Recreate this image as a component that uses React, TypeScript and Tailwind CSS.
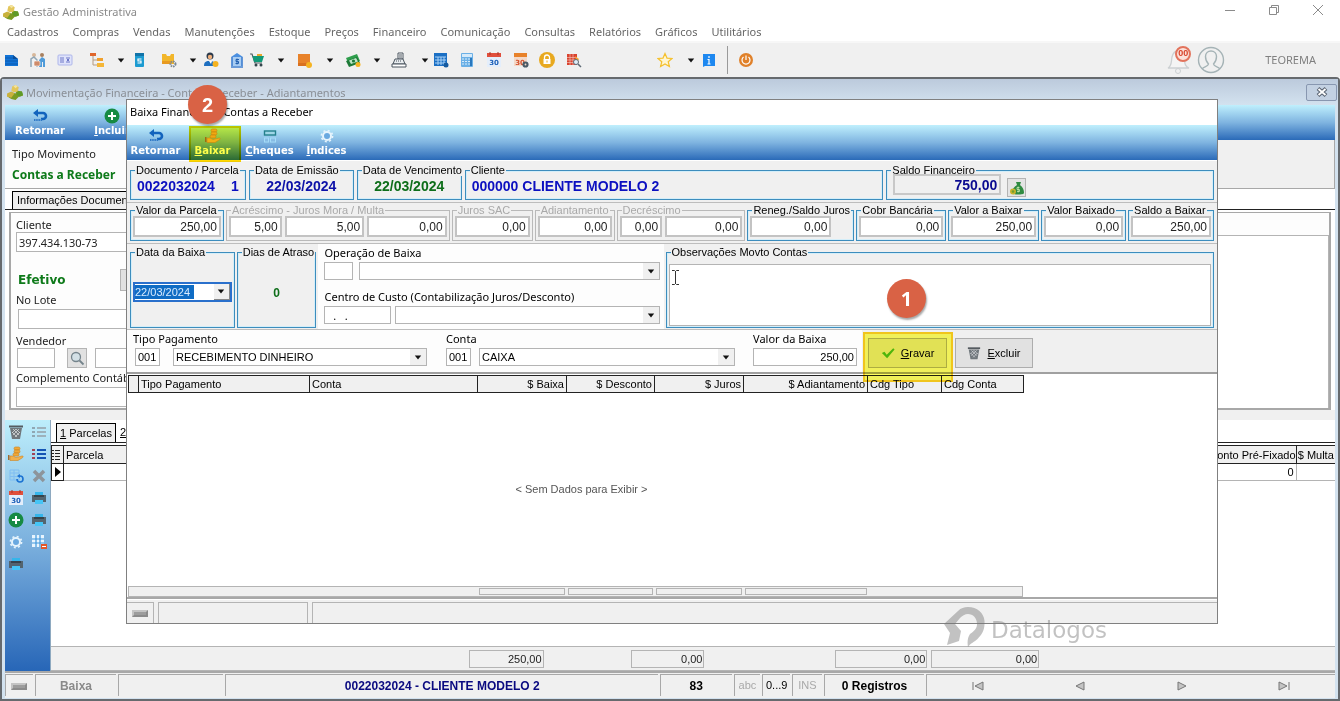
import type { ReactNode } from "react";
import clsx from "clsx";

const icons: Record<string, ReactNode> = {
  logo: (
    <>
      <path d="M1 11l5-3 3 1 1-3 5 1 1 4-4 1-3 3-4-1-2-1z" fill="#7a9b23" />
      <path d="M1 9l4-2 3 2-3 4-4-1z" fill="#c9b13c" />
      <path d="M6 2l3-1 3 2-1 4-4 1-2-2z" fill="#e3c65a" />
      <path d="M7 2l2-1 2 1-2 2z" fill="#f3e3a0" />
      <path d="M11 7l4 0 1 3-3 2-3-2z" fill="#5f9a28" />
    </>
  ),
  database: (
    <>
      <path d="M1 3h8l5 4v7H1z" fill="#1273d6" />
      <path d="M1 6h8M1 9h13M1 12h13" stroke="#0b5bb0" strokeWidth="1" />
      <path d="M9 3v4h5z" fill="#0a4f9c" />
    </>
  ),
  people: (
    <>
      <circle cx="4" cy="3" r="2" fill="#d7b79a" />
      <circle cx="12" cy="3" r="2" fill="#a8805f" />
      <path d="M1 15V7l3-2 3 3v7" fill="none" stroke="#8fa5b5" strokeWidth="1.5" />
      <path d="M9 15V8l3-3 3 2v8h-2v-5h-1v5z" fill="#4f9bd9" />
      <rect x="4" y="9" width="6" height="5" rx="1" fill="#cf8b6a" stroke="#fff" strokeWidth=".6" />
    </>
  ),
  card: (
    <>
      <rect x="1" y="3" width="14" height="10" rx="1" fill="#dfe3fa" stroke="#aeb6ea" />
      <path d="M3 6h4M3 8h4M3 10h4M9 6h4M9 10h4" stroke="#6c76c8" />
      <rect x="10" y="7" width="2" height="2" fill="#6c76c8" />
    </>
  ),
  tree: (
    <>
      <path d="M4 4v9h5M4 8h5" fill="none" stroke="#b59a80" />
      <rect x="1" y="1" width="6" height="3" fill="#e0662c" />
      <rect x="8" y="6" width="6" height="3" fill="#f0a02c" />
      <rect x="8" y="11" width="7" height="4" fill="#f5b738" />
    </>
  ),
  phone: (
    <>
      <rect x="4" y="1" width="9" height="14" rx="1" fill="#1c9bd1" />
      <rect x="4" y="1" width="9" height="3" fill="#1273a8" />
      <path d="M10.500 7H7v2h3v2H6.500" fill="none" stroke="#fff" strokeWidth="1.200" />
    </>
  ),
  boxGear: (
    <>
      <path d="M1 2h4l1 2h3l1-2h3v10H1z" fill="#f2b62a" />
      <path d="M1 9h9v3H1z" fill="#e89a20" />
      <circle cx="12" cy="12" r="2.500" fill="none" stroke="#7b8794" strokeWidth="2" strokeDasharray="1.500 .8" />
    </>
  ),
  userCoin: (
    <>
      <circle cx="7" cy="4" r="3.500" fill="#2b3a4c" />
      <circle cx="7" cy="5" r="2.200" fill="#f0b17d" />
      <path d="M1 14c0-5 3-5 6-5s5 1 6 5z" fill="#1e6fc0" />
      <path d="M6 9h3l-1 3z" fill="#fff" />
      <circle cx="12.500" cy="12" r="3" fill="#f5b321" />
    </>
  ),
  bank: (
    <>
      <path d="M2 5l6-4 6 4z" fill="#4b8fe0" />
      <path d="M3 5h10v9H3z" fill="#a9cdf2" />
      <path d="M3 5v9M13 5v9M2 15h12" stroke="#3f7fd0" strokeWidth="1.600" />
      <path d="M10 7.500H7v2h2.500v2H6.500M8 6.500v6" fill="none" stroke="#2360b0" />
    </>
  ),
  cart: (
    <>
      <path d="M1 2h2l3 9h7" fill="none" stroke="#4a5a5f" strokeWidth="1.200" />
      <path d="M3.500 4H15l-2 6H5z" fill="#129a78" />
      <path d="M8 2h5v2H8z" fill="#e9a72b" />
      <circle cx="7" cy="13" r="1.500" fill="#35464d" />
      <circle cx="12" cy="13" r="1.500" fill="#35464d" />
    </>
  ),
  box: (
    <>
      <path d="M2 2h12v12H2z" fill="#e8822a" />
      <path d="M2 11h12v3H2z" fill="#d9701f" />
      <circle cx="13" cy="13" r="3" fill="#f5b321" />
    </>
  ),
  money: (
    <>
      <path d="M1 6l11-4 3 7-11 4z" fill="#2e9e4c" />
      <path d="M1 9l11-4 3 6-11 4z" fill="#1d7a37" />
      <path d="M4 8.500l7-2.500 2 3.500-7 2.500z" fill="#bfe6c6" />
      <circle cx="8.500" cy="9" r="1.600" fill="#1d7a37" />
      <circle cx="13" cy="12.500" r="2.500" fill="#f5b321" />
    </>
  ),
  register: (
    <>
      <path d="M7 1h5v6H7z" fill="#fff" stroke="#4b555e" />
      <path d="M8 3h3M8 5h3" stroke="#4b555e" />
      <path d="M4 7h8l2 5H2z" fill="#e9edf0" stroke="#4b555e" />
      <path d="M1 12h14v3H1z" fill="#fff" stroke="#4b555e" />
      <path d="M5 9h6" stroke="#4b555e" strokeDasharray="1 1" />
    </>
  ),
  calGrid: (
    <>
      <rect x="1" y="1" width="13" height="13" fill="#1b6fc4" />
      <path d="M2 5h11M2 8h11M2 11h11M5 5v8M8 5v8M11 5v8" stroke="#a9d2f6" />
      <circle cx="13" cy="13" r="2.500" fill="#155a9f" />
    </>
  ),
  calc: (
    <>
      <rect x="2" y="1" width="12" height="14" rx="1" fill="#6bb0e6" />
      <rect x="3" y="2" width="10" height="3" fill="#d5eafa" />
      <path d="M3 7h8M3 9.500h8M3 12h8" stroke="#d9ecfa" strokeDasharray="2 1" />
      <path d="M12 6v8" stroke="#2a78bd" strokeWidth="2" />
    </>
  ),
  cal30: (
    <>
      <rect x="1" y="3" width="14" height="12" fill="#e4eefb" />
      <rect x="1" y="1" width="14" height="4" fill="#e04f3c" />
      <path d="M4 0v3M12 0v3" stroke="#a83224" />
      <text x="8" y="12.500" textAnchor="middle" fontSize="7" fontWeight="700" fontFamily="DejaVu Sans, sans-serif" fill="#1b5fb8">30</text>
    </>
  ),
  cal30Gear: (
    <>
      <rect x="1" y="3" width="13" height="11" fill="#f4d9c8" />
      <rect x="1" y="1" width="13" height="4" fill="#e8822a" />
      <text x="7" y="12.500" textAnchor="middle" fontSize="7" fontWeight="700" fontFamily="DejaVu Sans, sans-serif" fill="#d4502c">30</text>
      <circle cx="12.500" cy="12.500" r="2" fill="none" stroke="#4a5a66" strokeWidth="2.200" />
    </>
  ),
  lock: (
    <>
      <circle cx="8" cy="8" r="8" fill="#e8a91f" />
      <rect x="4.500" y="7" width="7" height="5" fill="#fff" />
      <path d="M5.500 7V5.500a2.500 2.500 0 015 0V7" fill="none" stroke="#fff" strokeWidth="1.300" />
      <path d="M8 8.500v2" stroke="#e8a91f" />
    </>
  ),
  gridSearch: (
    <>
      <rect x="1" y="2" width="10" height="11" fill="#d9432f" />
      <path d="M1 5.500h10M1 8h10M1 10.500h10M4 2v11M7 2v11" stroke="#f7cfc4" strokeWidth=".6" />
      <path d="M9 4l4 3-2 4z" fill="#f1a630" />
      <circle cx="10" cy="10" r="2.500" fill="#dfeefa" stroke="#5f6b76" />
      <path d="M12 12l3 3" stroke="#5f6b76" strokeWidth="1.500" />
    </>
  ),
  star: <path d="M8 1.500l2 4.600 5 .4-3.800 3.200 1.200 4.900L8 12l-4.400 2.600 1.200-4.900L1 6.500l5-.4z" fill="#fff6d2" stroke="#f5c02e" strokeWidth="1.200" />,
  info: (
    <>
      <path d="M2 2h12v12H4l-2 1z" fill="#1e88f0" />
      <path d="M8 4v2M6.500 7.500H8V12M6.500 12h3" fill="none" stroke="#fff" strokeWidth="1.200" />
    </>
  ),
  power: (
    <>
      <circle cx="8" cy="8" r="7" fill="#e0812a" />
      <path d="M5.500 5a4 4 0 105 0M8 3.500V8" fill="none" stroke="#fff" strokeWidth="1.200" />
    </>
  ),
  back: (
    <>
      <path d="M4 5h7a3 3 0 010 6H9" fill="none" stroke="#1263bd" strokeWidth="2.600" />
      <path d="M1 5l5-4v8z" fill="#1263bd" />
      <path d="M2 12h8" stroke="#2f78c6" strokeWidth="2" strokeDasharray="1.500 .7" />
    </>
  ),
  plus: (
    <>
      <circle cx="8" cy="8" r="7.500" fill="#178a43" />
      <path d="M8 4v8M4 8h8" stroke="#fff" strokeWidth="2" />
    </>
  ),
  coinsHand: (
    <>
      <rect x="6" y="1" width="6" height="3" rx="1.500" fill="#f0a838" stroke="#c8801c" strokeWidth=".6" />
      <rect x="6" y="4" width="6" height="3" rx="1.500" fill="#f0a838" stroke="#c8801c" strokeWidth=".6" />
      <rect x="5" y="7" width="6" height="3" rx="1.500" fill="#f0a838" stroke="#c8801c" strokeWidth=".6" />
      <path d="M0 9h1.500v5H0z" fill="#a06a32" />
      <path d="M2 10h3l3 1.500 6-1.500c2 0 1 1.500 0 2l-4 2.500H2z" fill="#f0b04c" stroke="#cf8522" strokeWidth=".6" />
    </>
  ),
  cheque: (
    <>
      <rect x="2.500" y="3" width="11" height="4" fill="#9fd6e6" stroke="#24808c" strokeWidth="1.400" />
      <rect x="2.500" y="10" width="4" height="4" fill="none" stroke="#a5dcf8" />
      <rect x="8.500" y="10" width="5" height="4" fill="none" stroke="#a5dcf8" />
    </>
  ),
  gear: (
    <>
      <circle cx="8" cy="8" r="4" fill="#6aa9e0" stroke="#e6f4fd" strokeWidth="2" />
      <circle cx="8" cy="8" r="5.600" fill="none" stroke="#e6f4fd" strokeWidth="1.600" strokeDasharray="2 2.400" />
    </>
  ),
  trash: (
    <>
      <path d="M1 2.500h14" stroke="#555b60" strokeWidth="2" />
      <path d="M2 4h12l-2 11H4z" fill="#70777c" />
      <path d="M5 5l6 6M8 5l4 4M4 8l5 5M11 5l-6 6M8 5L4 9M12 8l-5 5" stroke="#dfe2e4" strokeWidth=".7" />
    </>
  ),
  listGray: (
    <>
      <path d="M1 4h3M1 8h3M1 12h3" stroke="#8fa7b3" strokeWidth="2" />
      <path d="M6 4h9M6 8h9M6 12h9" stroke="#9db1bb" strokeWidth="2" />
    </>
  ),
  list: (
    <>
      <path d="M1 4h3M1 8h3M1 12h3" stroke="#a04458" strokeWidth="2" />
      <path d="M6 4h9M6 8h9M6 12h9" stroke="#1455b4" strokeWidth="2" />
    </>
  ),
  tableRefresh: (
    <>
      <path d="M2 2h9v10H2zM2 5h9M2 8.500h9M6 2v10" fill="none" stroke="#7fbdf2" />
      <path d="M9 11a3 3 0 103-3" fill="none" stroke="#1b72d2" strokeWidth="1.600" />
      <path d="M12 6v4l-3-2z" fill="#1b72d2" />
    </>
  ),
  cross: <path d="M3 3l10 10M13 3L3 13" stroke="#8d949a" strokeWidth="3.500" />,
  printer: (
    <>
      <path d="M4 2h8v4H4z" fill="#35b5ea" />
      <path d="M1 5h14v7H1z" fill="#53646f" />
      <path d="M3 5h10v2H3z" fill="#36434b" />
      <path d="M4 10h8v4H4z" fill="#45c4f5" />
    </>
  ),
  gridMinus: (
    <>
      <path d="M1 1h12v12H1z" fill="#e8f4fd" />
      <path d="M1 5h12M1 9h12M5 1v12M9 1v12" stroke="#3f97dd" strokeWidth="1.200" />
      <path d="M10 10h6v5h-6z" fill="#e2572b" />
      <path d="M11 12.500h4" stroke="#fff" />
    </>
  ),
  search: (
    <>
      <circle cx="7" cy="7" r="4.500" fill="#d3e0e6" stroke="#75848c" strokeWidth="1.300" />
      <path d="M10.500 10.500L14.500 14.500" stroke="#75848c" strokeWidth="1.800" />
    </>
  ),
  moneyBag: (
    <>
      <path d="M7 2h5l-1 3c3 2 4 5 4 8 0 2-12 2-12 0 0-4 2-6 5-8z" fill="#2f8b41" />
      <path d="M10.500 7.500H8v2h2.500v2H8M9.200 6.500v6" fill="none" stroke="#d6eeb8" strokeWidth=".7" />
      <circle cx="4" cy="11.500" r="3" fill="#c8b22c" />
      <circle cx="4" cy="11.500" r="1.300" fill="#6f9f2e" />
    </>
  ),
  check: <path d="M1 8l3-1.500 2.500 3.500L14 2.500 15.500 4 7 14z" fill="#4db51c" />,
  keyboard: (
    <>
      <path d="M0 5h16v7H0z" fill="#8b8b8b" />
      <path d="M0 5h16l-2 2H2v3l-2 2z" fill="#c4c4c4" />
      <path d="M2 7h12v3H2z" fill="#9d9d9d" />
    </>
  ),
};

function Icon({ name, className = "size-4" }: { name: string; className?: string }) {
  return (
    <svg viewBox="0 0 16 16" className={clsx("shrink-0", className)} aria-hidden="true">
      {icons[name]}
    </svg>
  );
}

function Caret({ className }: { className?: string }) {
  return (
    <svg viewBox="-1 -0.5 10 6" className={clsx("h-[5px] w-2 shrink-0", className)} aria-hidden="true">
      <path d="M0 0h8L4 5z" fill="#111" />
    </svg>
  );
}

const menus = [
  "Cadastros", "Compras", "Vendas", "Manutenções", "Estoque", "Preços",
  "Financeiro", "Comunicação", "Consultas", "Relatórios", "Gráficos", "Utilitários",
];

const tools: { icon: string; gap: string }[] = [
  { icon: "database", gap: "ml-1" },
  { icon: "people", gap: "ml-2.5" },
  { icon: "card", gap: "ml-[11px]" },
  { icon: "tree", gap: "ml-4" },
  { icon: "caret", gap: "ml-3" },
  { icon: "phone", gap: "ml-1.5" },
  { icon: "boxGear", gap: "ml-[14px]" },
  { icon: "caret", gap: "ml-3" },
  { icon: "userCoin", gap: "ml-1.5" },
  { icon: "bank", gap: "ml-2.5" },
  { icon: "cart", gap: "ml-1" },
  { icon: "caret", gap: "ml-3" },
  { icon: "box", gap: "ml-[11px]" },
  { icon: "caret", gap: "ml-[14px]" },
  { icon: "money", gap: "ml-[11px]" },
  { icon: "caret", gap: "ml-3" },
  { icon: "register", gap: "ml-2.5" },
  { icon: "caret", gap: "ml-[14px]" },
  { icon: "calGrid", gap: "ml-1" },
  { icon: "calc", gap: "ml-2.5" },
  { icon: "cal30", gap: "ml-[11px]" },
  { icon: "cal30Gear", gap: "ml-[11px]" },
  { icon: "lock", gap: "ml-2.5" },
  { icon: "gridSearch", gap: "ml-[11px]" },
  { icon: "star", gap: "ml-[75px]" },
  { icon: "caret", gap: "ml-[14px]" },
  { icon: "info", gap: "ml-1.5" },
];

const sideIcons = [
  "trash", "listGray", "coinsHand", "list", "tableRefresh", "cross", "cal30",
  "printer", "plus", "printer", "gear", "gridMinus", "printer",
];

const field = "h-[21px] min-w-0 border-2 border-[#c3c3c3] bg-white px-0.5 text-right text-xs text-[#222] outline-none";
const noto = "font-['Noto_Sans',sans-serif]";

function ToolButton({ icon, label, mnemonic = true, className }: { icon: string; label: string; mnemonic?: boolean; className?: string }) {
  return (
    <button type="button" className={clsx("flex flex-col items-center justify-center font-['DejaVu_Sans',sans-serif] text-[10px] leading-[14px] font-bold text-white", className)}>
      <Icon name={icon} />
      <span className={clsx(mnemonic && "first-letter:underline")}>{label}</span>
    </button>
  );
}

function Group({ title, muted, className, children }: { title: string; muted?: boolean; className?: string; children?: ReactNode }) {
  return (
    <fieldset className={clsx("min-w-0 border", muted ? "border-[#b9b9b9]" : "border-[#3d8dbd] shadow-[inset_0_0_0_1px_#d4eef9]", className)}>
      <legend className={clsx("ml-1 bg-[#f0f0f0] px-px text-[11px] leading-3 whitespace-nowrap", muted ? "text-[#a9a9a9]" : "text-black")}>{title}</legend>
      {children}
    </fieldset>
  );
}

function Amount({ label, value, className }: { label: string; value: string; className?: string }) {
  return <input aria-label={label} defaultValue={value} className={clsx(field, className)} />;
}

function Combo({ id, label, value = "", className }: { id?: string; label?: string; value?: string; className?: string }) {
  return (
    <div className={clsx("relative", className)}>
      <select id={id} aria-label={label} className="h-[18px] w-full appearance-none border border-[#b4b4b4] bg-white px-0.5 text-[11px] leading-4 outline-none">
        <option>{value}</option>
      </select>
      <span className="pointer-events-none absolute inset-y-px right-px flex w-4 items-center justify-center bg-[#f0f0f0]">
        <Caret />
      </span>
    </div>
  );
}

const small = "h-[18px] min-w-0 border border-[#b4b4b4] bg-white px-0.5 text-[11px] outline-none";

function Badge({ children, className }: { children: ReactNode; className?: string }) {
  return (
    <div className={clsx("pointer-events-none absolute flex size-[39px] items-center justify-center rounded-full bg-[#d96245] text-xl font-bold text-white shadow-[1px_2px_2px_rgba(0,0,0,0.35)]", className)}>
      {children}
    </div>
  );
}

function AppHeader() {
  return (
    <header className={noto}>
      <div className="flex h-6 items-center bg-white pl-0.5 text-[11px] text-[#8a8a8a]">
        <Icon name="logo" className="size-[17px]" />
        <h1 className="ml-1 flex-1">Gestão Administrativa</h1>
        <div className="flex h-full items-center gap-8 pr-4 pb-1 text-[#8b8b8b]">
          <button type="button" aria-label="Minimizar">
            <svg viewBox="0 0 12 12" className="size-3"><path d="M1 6.500h10" stroke="currentColor" /></svg>
          </button>
          <button type="button" aria-label="Restaurar">
            <svg viewBox="0 0 12 12" className="size-3"><path d="M1.500 3.500h7v7h-7zM3.500 3.500v-2h7v7h-2" fill="none" stroke="currentColor" /></svg>
          </button>
          <button type="button" aria-label="Fechar">
            <svg viewBox="0 0 12 12" className="size-3"><path d="M1 1l10 10M11 1L1 11" stroke="currentColor" /></svg>
          </button>
        </div>
      </div>
      <nav className="flex h-[17px] items-center gap-[14px] bg-white pl-[7px] text-[11px] text-[#666]">
        {menus.map((m) => (
          <button key={m} type="button">{m}</button>
        ))}
      </nav>
      <div className="flex h-9 items-center border-t-2 border-[#f7f7f7] bg-[#f0f0f0]">
        {tools.map((item, i) => (
          <button key={i} type="button" aria-label={item.icon} className={item.gap}>
            {item.icon === "caret" ? <Caret /> : <Icon name={item.icon} />}
          </button>
        ))}
        <span className="ml-2.5 h-7 w-px bg-[#9a9a9a]" />
        <button type="button" aria-label="Sair" className="ml-2.5">
          <Icon name="power" />
        </button>
        <div className="ml-auto flex items-center pr-6">
          <button type="button" aria-label="Notificações" className="relative">
            <svg viewBox="0 0 28 28" className="size-7">
              <path d="M3 22c4-2 3-6 4-11 1-4 3-6 6-6s5 2 6 6c1 5 0 9 5 11z" fill="#f4f4f4" stroke="#ccd0d2" strokeWidth="1.300" />
              <circle cx="13" cy="25" r="2.500" fill="none" stroke="#ccd0d2" />
            </svg>
            <span className="absolute top-0 right-0.5 flex size-4 items-center justify-center rounded-full border-2 border-[#e2735c] bg-[#fbe1da] font-['Liberation_Sans',sans-serif] text-[9px] font-bold text-[#d8432a]">00</span>
          </button>
          <button type="button" aria-label="Usuário" className="ml-1">
            <svg viewBox="0 0 28 28" className="size-7" fill="none" stroke="#a5b3b6" strokeWidth="1.400">
              <circle cx="14" cy="14" r="12.500" />
              <path d="M5 23c2-3 6-2 6.500-5-2-2-3-5-3-7.500C8.500 7 11 5 14 5s5.500 2 5.500 5.500c0 2.500-1 5.500-3 7.500.5 3 4.500 2 6.500 5" />
            </svg>
          </button>
          <span className="ml-10 text-[11px] text-[#808080]">TEOREMA</span>
        </div>
      </div>
    </header>
  );
}

const labelled = "text-[11px] leading-[15px] text-[#222]";

function MovimentoForm() {
  return (
    <div className={noto}>
      <div className="flex h-[49px] flex-col gap-1 border-r border-b border-[#a8a8a8] bg-linear-to-r from-[#fcfcfc] from-50% to-[#f0f0f0] to-50% pt-1.5 pl-[7px]">
        <span className={labelled}>Tipo Movimento</span>
        <strong className="text-xs leading-5 text-[#0e7a1a]">Contas a Receber</strong>
      </div>
      <div className="flex h-[21px] items-end border-b border-[#222] bg-white pl-[7px]">
        <button type="button" className="h-[18px] w-40 border-t border-l border-black bg-[#f0f0f0] pl-1 text-left font-['Liberation_Sans',sans-serif] text-[11px] whitespace-nowrap">
          Informações Documento
        </button>
      </div>
      <div className="mx-1 mt-0.5 flex h-[198px] border-2 border-t border-[#a8a8a8] bg-[#fdfdfd]">
        <div className="flex w-[480px] flex-col pt-1 pl-[5px]">
          <label htmlFor="cliente" className={labelled}>Cliente</label>
          <input id="cliente" defaultValue="397.434.130-73" className="h-5 w-full border border-[#b4b4b4] bg-white px-0.5 text-[11px] text-[#222]" />
          <div className="mt-4 flex items-center">
            <strong className="ml-0.5 w-[102px] font-['DejaVu_Sans',sans-serif] text-xs leading-6 text-[#0e7a1a]">Efetivo</strong>
            <button type="button" aria-label="Alterar situação" className="h-[22px] w-20 border border-[#b4b4b4] bg-[#e1e1e1]" />
          </div>
          <label htmlFor="lote" className={labelled}>No Lote</label>
          <input id="lote" className="mt-0.5 ml-0.5 h-5 w-80 border border-[#b4b4b4] bg-white" />
          <label htmlFor="vendedor" className={clsx(labelled, "mt-1")}>Vendedor</label>
          <div className="flex items-center">
            <input id="vendedor" className="ml-px h-5 w-[38px] border border-[#b4b4b4] bg-white" />
            <button type="button" aria-label="Pesquisar vendedor" className="ml-3 flex size-5 items-center justify-center border border-[#b4b4b4] bg-[#e1e1e1]">
              <Icon name="search" />
            </button>
            <input aria-label="Nome do vendedor" className="ml-2 h-5 w-60 border border-[#b4b4b4] bg-white" />
          </div>
          <label htmlFor="complemento" className={clsx(labelled, "mt-0.5")}>Complemento Contábil</label>
          <input id="complemento" className="mt-0.5 h-5 w-full shrink-0 border border-[#b4b4b4] bg-white" />
        </div>
        <div className="mt-[22px] flex-1 border border-b-0 border-[#b4b4b4] bg-white" />
      </div>
    </div>
  );
}

function Parcelas() {
  return (
    <div className="flex flex-1">
      <aside className="grid w-[46px] grid-cols-2 content-start justify-items-center gap-y-1.5 border-r border-[#8ea9c0] bg-linear-to-b from-[#bdeefb] via-[#7aafdd] to-[#2766b7] pt-1">
        {sideIcons.map((name, i) => (
          <button key={i} type="button" aria-label={name} className="flex size-4 items-center justify-center">
            <Icon name={name} />
          </button>
        ))}
      </aside>
      <div className="flex min-w-0 flex-1 flex-col bg-white pt-0.5">
        <div className="flex h-[21px] items-end border-b border-[#222] pl-[5px] text-[11px]">
          <button type="button" className="h-[19px] w-[60px] border border-b-0 border-black bg-[#f0f0f0] first-letter:underline">1 Parcelas</button>
          <button type="button" className="h-[19px] pl-1 first-letter:underline">2 Baixas</button>
        </div>
        <table className="mt-0.5 w-full table-fixed border-collapse text-[11px] leading-4">
          <thead>
            <tr className="h-[18px] border-y border-[#222] bg-[#f0f0f0]">
              <th className="w-3 border border-[#222]">
                <svg viewBox="0 0 8 12" className="h-3 w-2"><path d="M0 1.500h2M3 1.500h5M0 4.500h2M3 4.500h5M0 7.500h2M3 7.500h5M0 10.500h2M3 10.500h5" stroke="#222" /></svg>
              </th>
              <th className="pl-0.5 text-left font-normal">Parcela</th>
              <th className="border-r border-[#222] text-right font-normal">Desconto Pré-Fixado</th>
              <th className="w-[39px] font-normal whitespace-nowrap">$ Multa</th>
            </tr>
          </thead>
          <tbody>
            <tr className="h-[17px] border-b border-[#b4b4b4]">
              <td className="border border-[#222]">
                <svg viewBox="0 0 6 10" className="mx-auto h-2.5 w-1.5"><path d="M0 0l6 5-6 5z" /></svg>
              </td>
              <td />
              <td className="border-r border-[#b4b4b4] pr-0.5 text-right">0</td>
              <td />
            </tr>
          </tbody>
        </table>
        <div className="mt-auto grid h-[25px] grid-cols-[418fr_75fr_87fr_74fr_131fr_92fr_4fr_108fr_296fr] items-center border-y border-[#b4b4b4] bg-[#f0f0f0] text-[11px] text-[#222] [&>output]:h-[18px] [&>output]:border [&>output]:border-[#b4b4b4] [&>output]:pr-px [&>output]:text-right [&>output]:leading-4">
          <span />
          <output>250,00</output>
          <span />
          <output>0,00</output>
          <span />
          <output>0,00</output>
          <span />
          <output>0,00</output>
        </div>
      </div>
    </div>
  );
}

const cell = "flex h-[22px] items-center border-t border-l border-[#a8a8a8]";
const centered = clsx(cell, "justify-center");

function MovimentoWindow() {
  return (
    <section className="flex flex-1 flex-col rounded-t border-2 border-[#666a6e] bg-[#d3e2ef] px-[3px] pb-px">
      <div className="-mx-[3px] flex h-[26px] items-center bg-linear-to-b from-[#bccadc] to-[#d3e2ef] pr-px pl-1 text-[11px] text-[#8a8f96]">
        <Icon name="logo" className="size-[17px]" />
        <h2 className={clsx(noto, "ml-[3px] flex-1 pt-0.5")}>Movimentação Financeira - Contas a Receber - Adiantamentos</h2>
        <button type="button" aria-label="Fechar janela" className="flex h-[17px] w-[31px] items-center justify-center rounded-xs border border-[#8897b0] bg-[#c3d1e2]">
          <svg viewBox="0 0 12 10" className="h-2.5 w-3">
            <path d="M2 1.500l8 7M10 1.500l-8 7" stroke="#5a6472" strokeWidth="4" />
            <path d="M2.500 2l7 6M9.500 2l-7 6" stroke="#fff" strokeWidth="1.800" />
          </svg>
        </button>
      </div>
      <div className="flex h-[35px] bg-linear-to-b from-[#c0f0fd] via-[#7fb4e0] to-[#2a6ab8]">
        <ToolButton icon="back" label="Retornar" mnemonic={false} className="w-[70px]" />
        <ToolButton icon="plus" label="Incluir" className="w-[74px]" />
      </div>
      <div className="flex flex-1 flex-col bg-[#f0f0f0]">
        <div className="bg-white"><MovimentoForm /></div>
        <div className="h-2.5" />
        <Parcelas />
        <footer className="grid grid-cols-[28fr_82fr_106fr_436fr_72fr_27fr_28fr_30fr_101fr_412fr] gap-x-0.5 border-t-2 border-[#a8a8a8] pt-px pb-0.5 text-xs">
          <div className={centered}><Icon name="keyboard" /></div>
          <div className={clsx(centered, "font-bold text-[#8a8a8a]")}>Baixa</div>
          <div className={centered} />
          <div className={clsx(centered, "font-bold text-[#0a0a80]")}>0022032024 - CLIENTE MODELO 2</div>
          <div className={clsx(centered, "font-bold")}>83</div>
          <div className={clsx(centered, "text-[11px] text-[#a9a9a9]")}>abc</div>
          <div className={clsx(centered, "text-[11px]")}>0...9</div>
          <div className={clsx(centered, "text-[11px] text-[#a9a9a9]")}>INS</div>
          <div className={clsx(centered, "font-bold")}>0 Registros</div>
          <div className={clsx(cell, "justify-around")}>
            {[
              ["Primeiro", "M1 1v8M11 1v8L3 5z"],
              ["Anterior", "M10 1v8L2 5z"],
              ["Próximo", "M2 1v8l8-4z"],
              ["Último", "M1 1v8l8-4zM11 1v8"],
            ].map(([name, d]) => (
              <button key={name} type="button" aria-label={name}>
                <svg viewBox="0 0 12 10" className="h-2.5 w-3"><path d={d} fill="#c4c4c4" stroke="#777" /></svg>
              </button>
            ))}
          </div>
        </footer>
      </div>
    </section>
  );
}

const columns = [
  ["Tipo Pagamento", "w-[171px] text-left"],
  ["Conta", "w-[168px] text-left"],
  ["$ Baixa", "w-[89px] text-right"],
  ["$ Desconto", "w-[88px] text-right"],
  ["$ Juros", "w-[89px] text-right"],
  ["$ Adiantamento", "w-[124px] text-right"],
  ["Cdg Tipo", "w-[74px] text-left"],
  ["Cdg Conta", "w-[82px] text-left"],
];

const marker = "pointer-events-none absolute border-2 mix-blend-multiply";

function BaixaDialog() {
  return (
    <div role="dialog" aria-label="Baixa Financeira - Contas a Receber" className="absolute top-[99px] right-[122px] left-[126px] border border-[#808080] bg-[#f0f0f0]">
      <h2 className={clsx(noto, "h-[25px] bg-white pl-[3px] text-[11px] leading-6")}>Baixa Financeira - Contas a Receber</h2>
      <div className="flex h-[35px] bg-linear-to-b from-[#c0f0fd] via-[#7fb4e0] to-[#2a6ab8]">
        <ToolButton icon="back" label="Retornar" mnemonic={false} className="w-[57px]" />
        <div className="relative flex w-[57px] justify-center">
          <ToolButton icon="coinsHand" label="Baixar" />
          <span className={clsx(marker, "top-px right-0 -bottom-0.5 left-[5px] border-[#ffd800] bg-[#ffff4a]")} />
        </div>
        <ToolButton icon="cheque" label="Cheques" className="w-[57px]" />
        <ToolButton icon="gear" label="Índices" className="w-[57px]" />
      </div>

      <div className="grid h-[43px] grid-cols-[116fr_105fr_105fr_419fr_328fr] gap-[3px] border-t border-b border-t-white border-b-[#bdbdbd] px-[3px] pt-[3px] pb-0.5 text-sm">
        <Group title="Documento / Parcela">
          <div className="flex justify-between px-1.5 leading-5 font-bold text-[#0c10c0]">
            <span>0022032024</span>
            <span>1</span>
          </div>
        </Group>
        <Group title="Data de Emissão">
          <div className="text-center leading-5 font-bold text-[#0c10a8]">22/03/2024</div>
        </Group>
        <Group title="Data de Vencimento">
          <div className="text-center leading-5 font-bold text-[#0e6e1a]">22/03/2024</div>
        </Group>
        <Group title="Cliente">
          <div className="pl-1.5 leading-5 font-bold text-[#0c10c0]">000000 CLIENTE MODELO 2</div>
        </Group>
        <Group title="Saldo Financeiro">
          <div className="-mt-0.5 flex gap-1.5 pl-1.5">
            <input aria-label="Saldo financeiro" readOnly defaultValue="750,00" className="h-[21px] w-[108px] border-2 border-[#c8c8c8] bg-[#f0f0f0] px-0.5 text-right text-sm font-bold text-[#0a0a90]" />
            <button type="button" aria-label="Consultar saldo" className="mt-1 flex size-[19px] items-center justify-center border border-[#b4b4b4] bg-[#e4e4e4]">
              <Icon name="moneyBag" />
            </button>
          </div>
        </Group>
      </div>

      <div className="grid h-[41px] grid-cols-[94fr_224fr_81fr_80fr_129fr_107fr_90fr_91fr_85fr_86fr] gap-0.5 border-b border-[#bdbdbd] px-[3px] pt-px pb-0.5 [&>fieldset>div]:flex [&>fieldset>div]:gap-[3px] [&>fieldset>div]:px-0.5 [&_input]:w-full">
        <Group title="Valor da Parcela"><div><Amount label="Valor da parcela" value="250,00" /></div></Group>
        <Group title="Acréscimo - Juros Mora / Multa" muted>
          <div className="*:basis-20 *:first:basis-[53px]">
            <Amount label="Acréscimo" value="5,00" />
            <Amount label="Juros mora" value="5,00" />
            <Amount label="Multa" value="0,00" />
          </div>
        </Group>
        <Group title="Juros SAC" muted><div><Amount label="Juros SAC" value="0,00" /></div></Group>
        <Group title="Adiantamento" muted><div><Amount label="Adiantamento" value="0,00" /></div></Group>
        <Group title="Decréscimo" muted>
          <div className="*:basis-[43px] *:last:basis-[78px]">
            <Amount label="Decréscimo percentual" value="0,00" />
            <Amount label="Decréscimo valor" value="0,00" />
          </div>
        </Group>
        <Group title="Reneg./Saldo Juros"><div className="mr-5"><Amount label="Saldo juros" value="0,00" /></div></Group>
        <Group title="Cobr Bancária"><div><Amount label="Cobrança bancária" value="0,00" /></div></Group>
        <Group title="Valor a Baixar"><div><Amount label="Valor a baixar" value="250,00" /></div></Group>
        <Group title="Valor Baixado"><div><Amount label="Valor baixado" value="0,00" /></div></Group>
        <Group title="Saldo a Baixar"><div><Amount label="Saldo a baixar" value="250,00" /></div></Group>
      </div>

      <div className="grid h-[86px] grid-cols-[105fr_80fr_346fr_550fr] gap-0.5 border-b border-[#bdbdbd] px-[3px] text-xs *:[fieldset]:mt-0.5 *:[fieldset]:mb-px">
        <Group title="Data da Baixa">
          <div className="mx-0.5 mt-6 flex h-5 items-center border-2 border-[#2a70cc] bg-white">
            <input aria-label="Data da baixa" defaultValue="22/03/2024" className="h-3.5 w-[59px] min-w-0 bg-[#0f6cc4] text-[11px] text-[#d8ecff] outline-none" />
            <button type="button" aria-label="Abrir calendário" className="ml-auto flex h-4 w-4 items-center justify-center border-r border-b border-[#888] bg-[#f0f0f0]">
              <Caret />
            </button>
          </div>
        </Group>
        <Group title="Dias de Atraso">
          <output className="mt-[25px] block text-center leading-5 font-bold text-[#0e6e1a]">0</output>
        </Group>
        <div className={clsx(noto, "flex flex-col bg-[#fdfdfd] pr-1 pl-1.5")}>
          <label htmlFor="operacao" className="text-[11px] leading-[18px]">Operação de Baixa</label>
          <div className="flex gap-1.5">
            <input id="operacao" className={clsx(small, "w-[29px]")} />
            <Combo label="Operação" className="flex-1" />
          </div>
          <label htmlFor="centro" className="mt-2 text-[11px] leading-[18px]">Centro de Custo (Contabilização Juros/Desconto)</label>
          <div className="flex gap-1">
            <input id="centro" defaultValue="  .   ." className={clsx(small, "w-[67px] whitespace-pre")} />
            <Combo label="Centro de custo" className="flex-1" />
          </div>
        </div>
        <Group title="Observações Movto Contas" className="relative">
          <textarea aria-label="Observações" className="mx-0.5 mt-1.5 block h-[62px] w-[calc(100%-4px)] resize-none border border-[#b4b4b4] bg-white outline-none" />
          <svg viewBox="0 0 9 15" className="absolute top-3 left-1 h-[15px] w-[9px]" aria-hidden="true">
            <path d="M1 .5h2.500l1 1 1-1H8M1 14.500h2.500l1-1 1 1H8M4.500 1v13" fill="none" stroke="#333" />
          </svg>
        </Group>
      </div>

      <div className="flex h-[44px] border-b-2 border-[#a0a0a0]">
        <div className={clsx(noto, "grid w-[735px] grid-cols-[40px_273px_33px_274px_auto] content-start bg-[#fdfdfd] pl-1.5 text-[11px] leading-[18px]")}>
          <label htmlFor="tipo" className="col-span-2">Tipo Pagamento</label>
          <label htmlFor="conta" className="col-span-2">Conta</label>
          <label htmlFor="valor">Valor da Baixa</label>
          <input id="tipo" defaultValue="001" className={clsx(small, "ml-0.5 w-[25px] font-['Liberation_Sans',sans-serif]")} />
          <Combo label="Tipo de pagamento" value="RECEBIMENTO DINHEIRO" className="w-[254px] font-['Liberation_Sans',sans-serif]" />
          <input id="conta" defaultValue="001" className={clsx(small, "w-[25px] font-['Liberation_Sans',sans-serif]")} />
          <Combo label="Nome da conta" value="CAIXA" className="w-64 font-['Liberation_Sans',sans-serif]" />
          <input id="valor" defaultValue="250,00" className={clsx(small, "w-[104px] text-right font-['Liberation_Sans',sans-serif]")} />
        </div>
        <div className="flex gap-2 pt-2 pl-1.5 text-[11px]">
          <div className="relative">
            <button type="button" className="flex h-[30px] w-[79px] items-center justify-center gap-1.5 border border-[#adadad] bg-[#e1e1e1]">
              <Icon name="check" className="size-3.5" />
              <span className="first-letter:underline">Gravar</span>
            </button>
            <span className={clsx(marker, "-top-1.5 -right-1.5 -bottom-2.5 -left-[5px] z-10 border-[#ffd21e] bg-[#ffff60]")} />
          </div>
          <button type="button" className="flex h-[30px] w-[78px] items-center justify-center gap-1.5 border border-[#adadad] bg-[#e1e1e1]">
            <Icon name="trash" className="size-3.5" />
            <span className="first-letter:underline">Excluir</span>
          </button>
        </div>
      </div>

      <div className="flex h-[225px] flex-col border-b-2 border-[#a8a8a8] bg-white pt-px pl-px">
        <table className="w-[895px] table-fixed border-collapse text-[11px] leading-4">
          <thead>
            <tr className="h-[17px] bg-[#f0f0f0]">
              <th className="w-2.5 border border-[#222]" />
              {columns.map(([name, cls]) => (
                <th key={name} className={clsx("border border-[#222] px-0.5 py-0 font-normal whitespace-nowrap", cls)}>{name}</th>
              ))}
            </tr>
          </thead>
        </table>
        <p className="flex w-[907px] flex-1 items-center justify-center text-[11px] text-[#555]">&lt; Sem Dados para Exibir &gt;</p>
        <div className="grid h-[11px] w-[895px] grid-cols-[347px_86px_85px_86px_122px] items-center gap-x-[3px] border border-[#b4b4b4] bg-[#f0f0f0] *:h-[7px] *:border *:border-[#b4b4b4] *:first:border-0">
          <span /><span /><span /><span /><span />
        </div>
      </div>

      <div className="flex h-6 gap-1 border-t border-white pt-0.5 *:border-t *:border-l *:border-[#b4b4b4]">
        <div className="flex w-[27px] items-center justify-center border-l-0! border-r"><Icon name="keyboard" /></div>
        <div className="w-[150px] border-r" />
        <div className="flex-1" />
      </div>
    </div>
  );
}

export default function App() {
  return (
    <main className="relative flex min-h-screen flex-col overflow-hidden bg-white font-['Liberation_Sans',sans-serif] text-black">
      <AppHeader />
      <MovimentoWindow />
      <BaixaDialog />
      <div className="pointer-events-none absolute right-[233px] bottom-[54px] flex items-center gap-1.5 text-[#777]/45">
        <svg viewBox="0 0 41 40" className="h-10 w-[41px]" aria-hidden="true">
          <path d="M0 17L14 4C17 1 20 0 24 0c9 0 16 6 16.500 14 .5 8-2 13-7 18-3 3-7 4-9.500 8-1-6 0-10 2-13 4-3 7-5 7-10 0-6-4-10-9-10-3 0-6 2-8 4l-5 6 6 7-2 10L3 38l3-12z" fill="currentColor" />
        </svg>
        <span className="pt-1.5 font-['DejaVu_Sans',sans-serif] text-[23px] leading-7">Datalogos</span>
      </div>
      <Badge className="top-[85px] left-[188px]">2</Badge>
      <Badge className="top-[279px] left-[887px] font-['Open_Sans',sans-serif]">1</Badge>
    </main>
  );
}
